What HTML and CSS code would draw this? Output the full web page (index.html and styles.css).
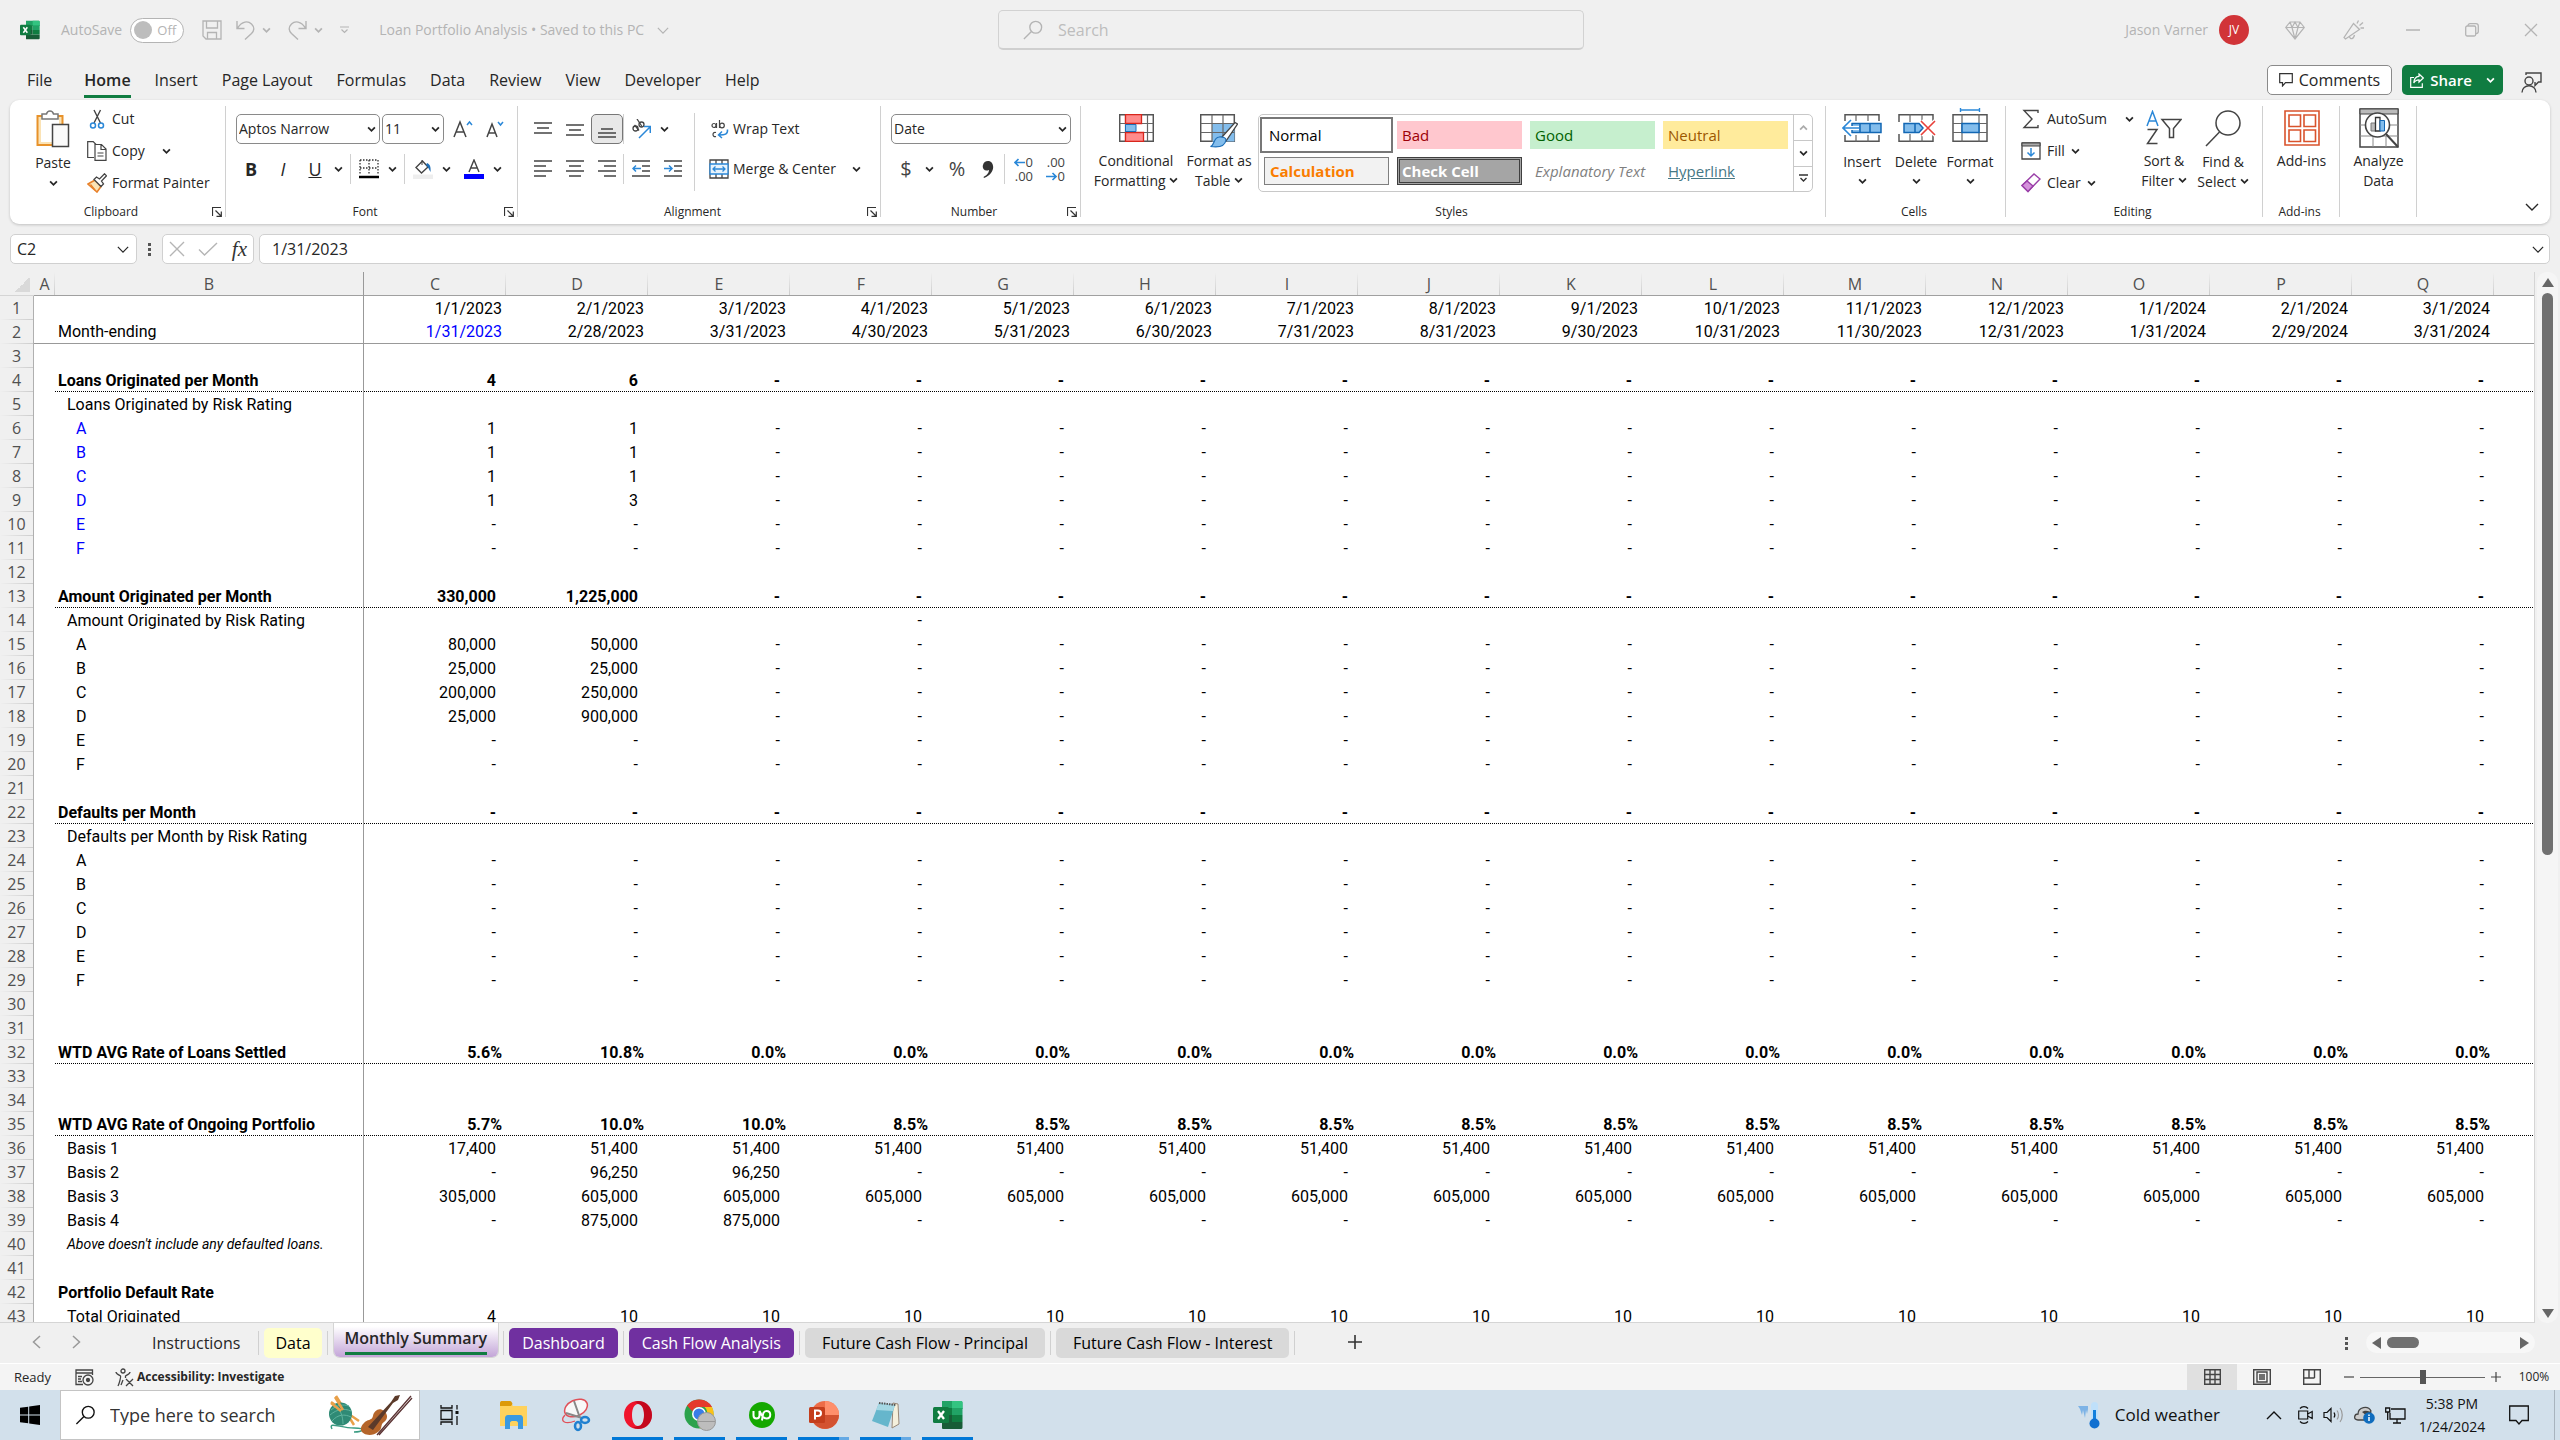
FILE: index.html
```html
<!DOCTYPE html>
<html lang="en">
<head>
<meta charset="utf-8">
<title>Loan Portfolio Analysis - Excel</title>
<link rel="stylesheet" href="styles.css">
</head>
<body>
<svg class="defs" aria-hidden="true">
  <symbol id="chev" viewBox="0 0 8 6"><path d="M1 1.2 4 4.2 7 1.2" fill="none" stroke="currentColor" stroke-width="1.6"/></symbol>
  <symbol id="chevL" viewBox="0 0 14 8"><path d="M1 1l6 6 6-6" fill="none" stroke="currentColor" stroke-width="1.4"/></symbol>
  <symbol id="excel" viewBox="0 0 30 30"><path d="M9 1h19a1.500 1.500 0 0 1 1.500 1.500V9H9z" fill="#21a366"/><path d="M19 1h9a1.500 1.500 0 0 1 1.500 1.500V9H19z" fill="#33c481"/><path d="M9 8h10v7H9z" fill="#107c41"/><path d="M19 8h10.500v7H19z" fill="#21a366"/><path d="M9 15h10v7H9z" fill="#185c37"/><path d="M19 15h10.500v7H19z" fill="#107c41"/><path d="M9 22h20.500v5.500A1.500 1.500 0 0 1 28 29H10a1 1 0 0 1-1-1z" fill="#185c37"/><rect y="7" width="16" height="16" rx="1.500" fill="#107c41"/><path d="M5 11l6 8M11 11l-6 8" stroke="#fff" stroke-width="2.300"/></symbol>
  <symbol id="magn" viewBox="0 0 22 22"><circle cx="14" cy="8" r="6.500" fill="none" stroke="currentColor" stroke-width="1.500"/><path d="M9.300 12.700 1 21" stroke="currentColor" stroke-width="1.500"/></symbol>
  <symbol id="launch" viewBox="0 0 10 10"><path d="M.5 9V.5H9M3.500 3.500l5 5M9.300 4.500v4.800H4.500" fill="none" stroke="#333" stroke-width="1.200"/></symbol>
</svg>

<header class="titlebar">
  <svg class="i20"><use href="#excel"/></svg>
  <label class="autosave"><span>AutoSave</span><span class="toggle"><input type="checkbox"><span class="off">Off</span></span></label>
  <button class="tb save" aria-label="Save"><svg width="20" height="20" viewBox="0 0 20 20" fill="none" stroke="currentColor" stroke-width="1.300"><path d="M1 1h18v18H4l-3-3zM4.500 1v7h11V1M5.500 19v-6.500h9V19"/></svg></button>
  <button class="tb undo" aria-label="Undo"><svg width="19" height="20" viewBox="0 0 19 20" fill="none" stroke="currentColor" stroke-width="1.400"><path d="M1 1v7.500h7.500M1.500 8C6 1 12 .5 15.500 4s2.500 7 0 9.500L9 19.500"/></svg></button>
  <button class="tb ch" aria-label="Undo list"><svg class="c8"><use href="#chev"/></svg></button>
  <button class="tb" aria-label="Redo"><svg width="19" height="20" viewBox="0 0 19 20" fill="none" stroke="currentColor" stroke-width="1.400"><path d="M18 1v7.500h-7.500M17.500 8C13 1 7 .5 3.500 4s-2.500 7 0 9.500l6.500 6"/></svg></button>
  <button class="tb ch" aria-label="Redo list"><svg class="c8"><use href="#chev"/></svg></button>
  <button class="tb cust" aria-label="Customize toolbar"><svg width="9" height="8" viewBox="0 0 9 8" fill="none" stroke="currentColor" stroke-width="1.200"><path d="M0 1h9M1.500 3.500l3 3 3-3"/></svg></button>
  <button class="tb docname">Loan Portfolio Analysis • Saved to this PC <svg width="12" height="7"><use href="#chevL"/></svg></button>
  <label class="search"><svg width="20" height="20"><use href="#magn"/></svg><input type="text" placeholder="Search" aria-label="Search"></label>
  <div class="account">
    <span class="who">Jason Varner</span><span class="avatar">JV</span>
    <button class="tb win" aria-label="Premium"><svg width="20" height="19" viewBox="0 0 20 19" fill="none" stroke="currentColor" stroke-width="1.200"><path d="M5 1h10l4.300 5.500L10 18 .7 6.500zM.7 6.500h18.600M5 1l2 5.500L10 18l3-11.500L15 1M7 6.500 10 1l3 5.500"/></svg></button>
    <button class="tb win" aria-label="What's new"><svg width="21" height="20" viewBox="0 0 21 20" fill="none" stroke="currentColor" stroke-width="1.300"><path d="M1 17.500 10.500 3.500l6 6L2.500 19zM6.500 16.500c.5 3 4 3 5-1.500M14 3.500 15.500.5M16.500 5.500 20 2.500M17.500 8h3.500"/></svg></button>
    <button class="tb win" aria-label="Minimize"><svg width="14" height="14" viewBox="0 0 14 14"><path d="M0 7h14" stroke="currentColor" stroke-width="1.500"/></svg></button>
    <button class="tb win" aria-label="Restore"><svg width="14" height="14" viewBox="0 0 14 14" fill="none" stroke="currentColor" stroke-width="1.300"><rect x=".7" y="3" width="10" height="10" rx="1.500"/><path d="M3 3C3 1.500 4 .7 5 .7h6c1.500 0 2.300 1 2.300 2.300v5.500c0 1.500-1 2-2.300 2.200"/></svg></button>
    <button class="tb win" aria-label="Close"><svg width="14" height="14" viewBox="0 0 14 14"><path d="M1 1l12 12M13 1 1 13" stroke="currentColor" stroke-width="1.300"/></svg></button>
  </div>
</header>

<nav class="menubar">
  <button class="file">File</button><button class="on">Home</button><button>Insert</button><button>Page Layout</button><button>Formulas</button><button>Data</button><button>Review</button><button>View</button><button>Developer</button><button>Help</button>
  <div class="right">
    <button class="comments"><svg width="14" height="14" viewBox="0 0 14 14" fill="none" stroke="#333" stroke-width="1.200"><path d="M.7.7h12.600v9H6.500L3.500 13V9.700H.7z"/></svg>Comments</button>
    <button class="share"><svg width="14" height="15" viewBox="0 0 14 15" fill="none" stroke="#fff" stroke-width="1.200"><path d="M4 4.500H.7v9.800h11.600v-4M9 1l4.300 4L9 9V6.800C6 6.800 4.800 8 3.800 10 4 6 5.500 3.500 9 3.300z"/></svg>Share<svg class="c8 sh"><use href="#chev"/></svg></button>
    <button class="person" aria-label="Catch up"><svg width="21" height="21" viewBox="0 0 21 21" fill="none" stroke="#444" stroke-width="1.400"><circle cx="8" cy="9" r="4"/><path d="M1 20.500c0-9 14-9 14 0M5 3V1h15v9h-2.500L14 13.500V10"/></svg></button>
  </div>
</nav>

<section class="ribbon" aria-label="Home commands">
  <div class="group g-clip">
    <div class="body">
      <button class="big paste"><svg width="34" height="38" viewBox="0 0 34 38"><path d="M1.500 6h25v29h-25z" fill="#fbe3b5" stroke="#e8922a" stroke-width="2"/><path d="M5 9h18v23H5z" fill="#fff"/><path d="M6 9V4h4.500c1-4 6-4 7 0H22v5z" fill="#fff" stroke="#777" stroke-width="1.500"/><path d="M16.500 14.500h16v22h-16z" fill="#fafafa" stroke="#444" stroke-width="1.500"/></svg><span>Paste</span><svg class="c8"><use href="#chev"/></svg></button>
      <div class="stack">
        <button class="row"><svg width="20" height="20" viewBox="0 0 20 20" fill="none"><path d="M7 1l6.500 13M13.500 1 7 14" stroke="#444" stroke-width="1.400"/><circle cx="6" cy="16.500" r="2.500" stroke="#2b88d8" stroke-width="1.500"/><circle cx="14" cy="16.500" r="2.500" stroke="#2b88d8" stroke-width="1.500"/></svg>Cut</button>
        <button class="row"><svg width="20" height="20" viewBox="0 0 20 20" fill="#fff" stroke="#444" stroke-width="1.200"><path d="M7 16.500H.7V.7h5.500L9 3.500"/><path d="M8 3.500h6.500l4.500 4.500v11.300H8zM14 3.500V8.500h5M10.500 12h6M10.500 15h6"/></svg>Copy<svg class="c8 gap14"><use href="#chev"/></svg></button>
        <button class="row"><svg width="20" height="20" viewBox="0 0 20 20"><path d="M1 11l7-4 6 6.500L10 19z" fill="#fbe3b5" stroke="#e8812a" stroke-width="1.600"/><path d="M3.500 11.500 8 17" stroke="#e8812a" stroke-width="1.300"/><path d="M7 6.500 9.500 4l3 2L17.500.8l2 2L14.500 8l2 3-2.500 2.500z" fill="#fff" stroke="#444" stroke-width="1.300"/></svg>Format Painter</button>
      </div>
    </div>
    <div class="foot"><span>Clipboard</span><button aria-label="Clipboard settings"><svg><use href="#launch"/></svg></button></div>
  </div>

  <div class="group g-font">
    <div class="body rows">
      <div class="line">
        <span class="sel fontname"><select aria-label="Font"><option>Aptos Narrow</option></select><svg class="c8"><use href="#chev"/></svg></span>
        <span class="sel fontsize"><select aria-label="Font size"><option>11</option></select><svg class="c8"><use href="#chev"/></svg></span>
        <button class="ic" aria-label="Grow font"><svg width="20" height="20" viewBox="0 0 20 20" fill="none"><path d="M1 18 7 3l6 15M3 13h8" stroke="#444" stroke-width="1.500"/><path d="M14 6l2.500-3L19 6" stroke="#2b88d8" stroke-width="1.500"/></svg></button>
        <button class="ic" aria-label="Shrink font"><svg width="20" height="20" viewBox="0 0 20 20" fill="none"><path d="M2 18 7 5l5 13M4 14h6" stroke="#444" stroke-width="1.500"/><path d="M13 3l2.500 3L18 3" stroke="#2b88d8" stroke-width="1.500"/></svg></button>
      </div>
      <div class="line">
        <button class="ic"><b>B</b></button><button class="ic"><i>I</i></button><button class="ic"><u>U</u></button><button class="ch"><svg class="c8"><use href="#chev"/></svg></button>
        <span class="sep"></span>
        <button class="ic" aria-label="Borders"><svg width="20" height="20" viewBox="0 0 20 20"><path d="M1 1h18M1 9h18M1 1v15M10 1v15M19 1v15" stroke="#333" stroke-width="1.300" stroke-dasharray="1.500 1.500"/><path d="M0 18h20" stroke="#000" stroke-width="2.500"/></svg></button><button class="ch"><svg class="c8"><use href="#chev"/></svg></button>
        <span class="sep"></span>
        <button class="ic" aria-label="Fill color"><svg width="20" height="20" viewBox="0 0 20 20"><path d="M0 15.500h20V20H0z" fill="#eee"/><path d="M3 8.500 9.500 2l5.500 6-6.500 6z" fill="#fff" stroke="#444" stroke-width="1.400"/><path d="M9 1v5" stroke="#444"/><path d="M14 4c3 1 4 4 3.500 9C16 11 15.500 8 13 6z" fill="#1e6fb8"/></svg></button><button class="ch"><svg class="c8"><use href="#chev"/></svg></button>
        <button class="ic" aria-label="Font color"><svg width="20" height="20" viewBox="0 0 20 20"><path d="M5 13 10 1l5 12M6.500 9h7" fill="none" stroke="#444" stroke-width="1.400"/><path d="M0 15h20v5H0z" fill="#00f"/></svg></button><button class="ch"><svg class="c8"><use href="#chev"/></svg></button>
      </div>
    </div>
    <div class="foot"><span>Font</span><button aria-label="Font settings"><svg><use href="#launch"/></svg></button></div>
  </div>

  <div class="group g-align">
    <div class="body">
      <div class="rows">
        <div class="line">
          <button class="ic" aria-label="Top align"><svg class="al" viewBox="0 0 18 18"><path d="M0 3h18M3 8h12M0 13h18"/></svg></button>
          <button class="ic" aria-label="Middle align"><svg class="al" viewBox="0 0 18 18"><path d="M0 5h18M3 10h12M0 15h18"/></svg></button>
          <button class="ic pressed" aria-label="Bottom align"><svg class="al" viewBox="0 0 18 18"><path d="M3 9h12M0 13h18M0 17h18"/></svg></button>
          <span class="sep tight"></span>
          <button class="ic" aria-label="Orientation"><svg width="20" height="20" viewBox="0 0 20 20"><g fill="none" stroke="#444" stroke-width="1.300"><circle cx="4.500" cy="9.500" r="2.500"/><path d="M3.500 6 8 11.500"/><circle cx="10.500" cy="5.500" r="2.500"/><path d="M6 0l5 7.500"/></g><path d="M8 19 19 8M13 7.500h6.300V14" fill="none" stroke="#2b88d8" stroke-width="1.500"/></svg></button><button class="ch"><svg class="c8"><use href="#chev"/></svg></button>
        </div>
        <div class="line">
          <button class="ic" aria-label="Align left"><svg class="al" viewBox="0 0 18 18"><path d="M0 1h18M0 6h12M0 11h18M0 16h12"/></svg></button>
          <button class="ic" aria-label="Center"><svg class="al" viewBox="0 0 18 18"><path d="M0 1h18M3 6h12M0 11h18M3 16h12"/></svg></button>
          <button class="ic" aria-label="Align right"><svg class="al" viewBox="0 0 18 18"><path d="M0 1h18M6 6h12M0 11h18M6 16h12"/></svg></button>
          <span class="sep tight"></span>
          <button class="ic" aria-label="Decrease indent"><svg class="al" viewBox="0 0 18 18"><path d="M0 1h18M10 6h8M10 11h8M0 16h18"/><path class="blue" d="M9 8.500H1M4 5.500l-3 3 3 3"/></svg></button>
          <button class="ic" aria-label="Increase indent"><svg class="al" viewBox="0 0 18 18"><path d="M0 1h18M10 6h8M10 11h8M0 16h18"/><path class="blue" d="M0 8.500h8M5 5.500l3 3-3 3"/></svg></button>
        </div>
      </div>
      <span class="vsep"></span>
      <div class="rows wrapcol">
        <button class="row"><svg width="20" height="20" viewBox="0 0 20 20" fill="none" stroke="#444" stroke-width="1.200"><circle cx="5" cy="6.500" r="2"/><path d="M7.500 4v5M10.500 1v8"/><circle cx="13" cy="6.500" r="2.300"/><path d="M7 13.500c-4-1.500-4 5.500 0 4"/><path d="M18.500 10.500c.5 5-3 5.500-8 5.500M13 12.500 9.500 16l3.500 3" stroke="#2b88d8" stroke-width="1.500"/></svg>Wrap Text</button>
        <button class="row"><svg width="20" height="20" viewBox="0 0 20 20" fill="none" stroke="#444" stroke-width="1.300"><path d="M1 1h18v18H1zM7 1v4M13 1v4M7 15v4M13 15v4M10 1"/><path d="M1 5h18v10H1z" fill="#e8f3fb" stroke="#2b88d8"/><path d="M4 10h12M6.500 7.500 4 10l2.500 2.500M13.500 7.500 16 10l-2.500 2.500" stroke="#2b88d8"/></svg>Merge &amp; Center<svg class="c8 gap14"><use href="#chev"/></svg></button>
      </div>
    </div>
    <div class="foot"><span>Alignment</span><button aria-label="Alignment settings"><svg><use href="#launch"/></svg></button></div>
  </div>

  <div class="group g-num">
    <div class="body rows">
      <div class="line"><span class="sel numfmt"><select aria-label="Number format"><option>Date</option></select><svg class="c8"><use href="#chev"/></svg></span></div>
      <div class="line">
        <button class="ic sym">$</button><button class="ch"><svg class="c8"><use href="#chev"/></svg></button><button class="ic sym pct">%</button><button class="ic" aria-label="Comma style"><svg width="12" height="17" viewBox="0 0 12 17"><path d="M6 0c7 0 8 13-4 17l-.5-1C6 13.500 7 11 7 9 2 11 0 7 1 4 1.500 1.500 3.500 0 6 0z" fill="#333"/></svg></button>
        <span class="sep tight"></span>
        <button class="dec" aria-label="Increase decimal"><span><svg width="11" height="9" viewBox="0 0 11 9"><path d="M11 4.500H1M4.500 1 1 4.500 4.500 8"/></svg>0</span><span>.00</span></button>
        <button class="dec" aria-label="Decrease decimal"><span>.00</span><span><svg width="11" height="9" viewBox="0 0 11 9"><path d="M0 4.500h10M6.500 1 10 4.500 6.500 8"/></svg>0</span></button>
      </div>
    </div>
    <div class="foot"><span>Number</span><button aria-label="Number settings"><svg><use href="#launch"/></svg></button></div>
  </div>

  <div class="group g-styles">
    <div class="body">
      <button class="big two cf"><svg width="35" height="28" viewBox="0 0 35 28"><path d="M.7.700h33.600v26.600H.7z" fill="#fff" stroke="#555" stroke-width="1.500"/><path d="M.7 9.500h33.600M.7 18.500h33.600M6.500.7v26.600M16 .7v26.600M28.500.7v26.600" stroke="#666" stroke-width="1.200"/><path d="M6.500.700h16v8.800h-16zM6.500 18.500h18v8.800h-18z" fill="#ff8b8b" stroke="#d8261c" stroke-width="1.300"/><path d="M6.500 10.500H17v7H6.500z" fill="#83bdec" stroke="#1e6fb8"/></svg><span>Conditional<br>Formatting <svg class="c8"><use href="#chev"/></svg></span></button>
      <button class="big two fat"><svg width="38" height="34" viewBox="0 0 38 34"><path d="M.7.700h33.600v26.600H.7z" fill="#fff" stroke="#555" stroke-width="1.500"/><path d="M12 9.500h22.500v18H12z" fill="#83bdec"/><path d="M.7 9.500h33.600M.7 18.500h33.600M12 .7v26.600M23 .7v26.600" stroke="#666" stroke-width="1.200"/><path d="M22 23 35 8.500l2.500 1.500L26 27z" fill="#fff" stroke="#444" stroke-width="1.300"/><path d="M26 26c-1 6-6 8-15.500 6.500 4-1 3-9 8.500-9.500 4-.5 7 1 7 3z" fill="#83bdec" stroke="#1e6fb8" stroke-width="1.200"/></svg><span>Format as<br>Table <svg class="c8"><use href="#chev"/></svg></span></button>
      <div class="gallery">
        <div class="swatches">
          <button class="s-normal">Normal</button><button class="s-bad">Bad</button><button class="s-good">Good</button><button class="s-neutral">Neutral</button>
          <button class="s-calc">Calculation</button><button class="s-check">Check Cell</button><button class="s-expl">Explanatory Text</button><button class="s-link">Hyperlink</button>
        </div>
        <div class="gscroll"><button class="dim" aria-label="Up"><svg class="c8 flip"><use href="#chev"/></svg></button><button aria-label="Down"><svg class="c8"><use href="#chev"/></svg></button><button aria-label="More"><svg width="9" height="9" viewBox="0 0 9 9" fill="none" stroke="#333" stroke-width="1.400"><path d="M0 1h9M1.500 4l3 3 3-3"/></svg></button></div>
      </div>
    </div>
    <div class="foot"><span>Styles</span></div>
  </div>

  <div class="group g-cells">
    <div class="body">
      <button class="big cell"><svg width="40" height="40" viewBox="0 0 40 40"><path d="M3 6.700h34v26.600H3z" fill="#fff" stroke="#555" stroke-width="1.500"/><path d="M14 6v28M26 6v28" stroke="#666" stroke-width="1.200"/><path d="M0 13h40v14H0z" fill="#fff"/><path d="M10 15.500h29v9H10zM18 15.500v9M28 15.500v9" fill="#83bdec" stroke="#1267b4" stroke-width="1.500"/><path d="M17 20H1M9 12l-8 8 8 8" fill="none" stroke="#fff" stroke-width="4"/><path d="M17 20H1M9 12l-8 8 8 8" fill="none" stroke="#2b88d8" stroke-width="1.600"/></svg><span>Insert</span><svg class="c8"><use href="#chev"/></svg></button>
      <button class="big cell"><svg width="40" height="40" viewBox="0 0 40 40"><path d="M3 6.700h34v26.600H3z" fill="#fff" stroke="#555" stroke-width="1.500"/><path d="M14 6v28M26 6v28" stroke="#666" stroke-width="1.200"/><path d="M0 14h40v12H0z" fill="#fff"/><path d="M8 15.500h15l4 4.500-4 4.500H8zM19 15.500v9" fill="#83bdec" stroke="#1267b4" stroke-width="1.500"/><path d="M25 13l14 14M39 13 25 27" stroke="#fff" stroke-width="4"/><path d="M25 13l14 14M39 13 25 27" stroke="#e8403a" stroke-width="1.600"/></svg><span>Delete</span><svg class="c8"><use href="#chev"/></svg></button>
      <button class="big cell"><svg width="40" height="40" viewBox="0 0 40 40"><path d="M3 6.700h34v26.600H3z" fill="#fff" stroke="#555" stroke-width="1.500"/><path d="M3 15.500h34M3 24.500h34M12 6v28M29 6v28" stroke="#666" stroke-width="1.200"/><path d="M12 15.500h17v9H12z" fill="#83bdec" stroke="#1267b4" stroke-width="1.500"/><path d="M10.500 2h19M10.500 0v4M29.500 0v4" stroke="#2b88d8" stroke-width="1.400"/></svg><span>Format</span><svg class="c8"><use href="#chev"/></svg></button>
    </div>
    <div class="foot"><span>Cells</span></div>
  </div>

  <div class="group g-edit">
    <div class="body">
      <div class="stack">
        <button class="row"><svg width="20" height="20" viewBox="0 0 20 20"><path d="M17 4V1.500H3L11 10 3 18.500h14V16" fill="none" stroke="#444" stroke-width="1.400"/></svg>AutoSum<svg class="c8 gap14"><use href="#chev"/></svg></button>
        <button class="row"><svg width="20" height="20" viewBox="0 0 20 20"><path d="M1 2h18v16H1z" fill="#fff" stroke="#444" stroke-width="1.300"/><path d="M1 2h18v3H1z" fill="#aaa" stroke="#444"/><path d="M10 7v8M6.500 11.500 10 15l3.500-3.500" fill="none" stroke="#2b88d8" stroke-width="1.500"/></svg>Fill<svg class="c8"><use href="#chev"/></svg></button>
        <button class="row"><svg width="20" height="20" viewBox="0 0 20 20"><path d="M1 12.500 13 1l6 5L7 18.500z" fill="#fff" stroke="#9a3fa8" stroke-width="1.400"/><path d="M1 12.500 6 8l6 5-5 5.500z" fill="#d592dc" stroke="#9a3fa8" stroke-width="1.400"/></svg>Clear<svg class="c8"><use href="#chev"/></svg></button>
      </div>
      <button class="big two sf"><svg width="36" height="36" viewBox="0 0 36 36" fill="none" stroke-width="1.500"><path d="M1 16 6.500 1.500 12 16M3 11h7" stroke="#2b88d8"/><path d="M1.500 19.500h9.500L1.500 33.500H11.500" stroke="#444"/><path d="M16 9.500h19l-7.500 9V27.500h-4v-9z" stroke="#444"/></svg><span>Sort &amp;<br>Filter <svg class="c8"><use href="#chev"/></svg></span></button>
      <button class="big two fs"><svg width="36" height="37" viewBox="0 0 36 37" fill="none" stroke="#444" stroke-width="1.500"><circle cx="23" cy="13" r="12"/><path d="M14.500 22 1 36"/></svg><span>Find &amp;<br>Select <svg class="c8"><use href="#chev"/></svg></span></button>
    </div>
    <div class="foot"><span>Editing</span></div>
  </div>

  <div class="group g-add">
    <div class="body"><button class="big two"><svg width="36" height="36" viewBox="0 0 36 36" fill="none" stroke="#d9532c"><path d="M1 1h34v34H1z" stroke-width="1.600"/><path d="M5 5h11.500v11.500H5zM20 5h11.500v11.500H20zM5 20h11.500v11.500H5zM20 20h11.500v11.500H20z" stroke-width="1.600"/></svg><span>Add-ins</span></button></div>
    <div class="foot"><span>Add-ins</span></div>
  </div>
  <div class="group g-data">
    <div class="body"><button class="big two"><svg width="40" height="40" viewBox="0 0 40 40"><path d="M1 1h38v38H1z" fill="#fff" stroke="#444" stroke-width="1.500"/><path d="M1 1h38v5H1z" fill="#bbb" stroke="#444"/><path d="M1 17h38M1 28h38M14 28v11M27 28v11" stroke="#888"/><circle cx="18.500" cy="17" r="12" fill="#fff" stroke="#444" stroke-width="1.600"/><path d="M27 26 39 39" stroke="#444" stroke-width="2"/><path d="M12 15h5v8h-5z" fill="#bbb" stroke="#777"/><path d="M16.500 9.500h4.500V23h-4.500z" fill="#fff" stroke="#333" stroke-width="1.300"/><path d="M21 12.500h4.500V23H21z" fill="#83bdec" stroke="#1267b4"/></svg><span>Analyze<br>Data</span></button></div>
    <div class="foot"></div>
  </div>
  <button class="collapse" aria-label="Collapse ribbon"><svg width="14" height="8"><use href="#chevL"/></svg></button>
</section>

<div class="formulabar">
  <span class="namebox"><input type="text" value="C2" aria-label="Name box"><svg width="12" height="7"><use href="#chevL"/></svg></span>
  <span class="dots"></span>
  <span class="fx">
    <button aria-label="Cancel"><svg width="16" height="16" viewBox="0 0 16 16"><path d="M1 1l14 14M15 1 1 15" stroke="#b5b5b5" stroke-width="1.400"/></svg></button>
    <button aria-label="Enter"><svg width="20" height="14" viewBox="0 0 20 14"><path d="M1 7.500 6.500 13 19 1" fill="none" stroke="#b5b5b5" stroke-width="1.400"/></svg></button>
    <button class="fxb">fx</button>
  </span>
  <span class="formula"><input type="text" value="1/31/2023" aria-label="Formula"><svg width="12" height="7"><use href="#chevL"/></svg></span>
</div>

<main class="sheet">
  <div class="gridwrap">
    <table class="grid">
      <colgroup id="cols"><col class="w-head"><col class="w-a"><col class="w-b"></colgroup>
      <thead><tr id="heads"><th class="corner"></th></tr></thead>
      <tbody id="rows"></tbody>
    </table>
  </div>
  <div class="vscroll"><span class="arrow-up"></span><span class="thumb"></span><span class="arrow-down"></span></div>
</main>

<div class="sheettabs">
  <button class="nav first" aria-label="Previous sheet"><svg width="9" height="14" viewBox="0 0 9 14"><path d="M8 1 1.500 7 8 13" fill="none" stroke="#999" stroke-width="1.500"/></svg></button>
  <button class="nav" aria-label="Next sheet"><svg width="9" height="14" viewBox="0 0 9 14"><path d="M1 1l6.500 6L1 13" fill="none" stroke="#999" stroke-width="1.500"/></svg></button>
  <button class="tab plain">Instructions</button>
  <button class="tab data">Data</button>
  <button class="tab active"><span>Monthly Summary</span></button>
  <button class="tab purple">Dashboard</button>
  <button class="tab purple">Cash Flow Analysis</button>
  <button class="tab gray">Future Cash Flow - Principal</button>
  <button class="tab gray">Future Cash Flow - Interest</button>
  <button class="plus" aria-label="New sheet"><svg width="14" height="14" viewBox="0 0 14 14"><path d="M0 7h14M7 0v14" stroke="#333" stroke-width="1.600"/></svg></button>
  <span class="dots"></span>
  <div class="hscroll"><span class="lt"></span><span class="thumb"></span><span class="rt"></span></div>
</div>

<footer class="status">
  <span class="ready">Ready</span>
  <svg width="19" height="17" viewBox="0 0 19 17" fill="none" stroke="#444" stroke-width="1.300"><path d="M8 15.500H1V1h16.500v5M1 4h16.500M3 7.500h4M3 10h3M3 12.500h4"/><circle cx="13" cy="11" r="5"/><circle cx="13" cy="11" r="1.500" fill="#444"/></svg>
  <button class="acc"><svg width="19" height="19" viewBox="0 0 19 19" fill="none" stroke="#444" stroke-width="1.300"><circle cx="8" cy="3" r="2"/><path d="M1 4c0 2 4 3.500 4.500 4S4.500 15 3 18M15 4c0 2-4 3.500-4.500 4v2M6 17l2-5M11 11l7 7M18 11l-7 7"/></svg>Accessibility: Investigate</button>
  <div class="views">
    <button class="on" aria-label="Normal view"><svg width="17" height="16" viewBox="0 0 17 16" fill="none" stroke="#444" stroke-width="1.400"><path d="M.7.700h15.600v14.600H.7zM.7 5.500h15.600M.7 10.500h15.600M6 .7v14.600M11 .7v14.600"/></svg></button>
    <button aria-label="Page layout view"><svg width="18" height="16" viewBox="0 0 18 16" fill="none" stroke="#444" stroke-width="1.400"><path d="M.7.700h16.600v14.600H.7zM4 3h10v10H4zM6 6h6M6 8h6M6 10h6"/></svg></button>
    <button aria-label="Page break preview"><svg width="18" height="16" viewBox="0 0 18 16" fill="none" stroke="#444" stroke-width="1.400"><path d="M.7.700h16.600v14.600H.7zM6 .7V9M11.500.7V9M.7 9h10.800"/></svg></button>
  </div>
  <div class="zoom"><button aria-label="Zoom out"><svg width="10" height="10" viewBox="0 0 10 10"><path d="M0 5h10" stroke="#444" stroke-width="1.200"/></svg></button><input type="range" min="0" max="100" value="50" aria-label="Zoom"><button aria-label="Zoom in"><svg width="10" height="10" viewBox="0 0 10 10"><path d="M0 5h10M5 0v10" stroke="#444" stroke-width="1.200"/></svg></button><button class="pc">100%</button></div>
</footer>

<div class="taskbar">
  <button class="start" aria-label="Start"><svg width="20" height="20" viewBox="0 0 20 20"><path d="M0 2.800 8.200 1.700v7.800H0zM9.200 1.500 20 0v9.500H9.200zM0 10.500h8.200v7.800L0 17.200zM9.200 10.500H20V20L9.200 18.500z"/></svg></button>
  <label class="tsearch"><svg width="21" height="20"><use href="#magn"/></svg><input type="text" placeholder="Type here to search" aria-label="Type here to search">
    <svg class="art" width="88" height="42" viewBox="0 0 88 42"><path d="M4 35c-4-8 8-1 22-1s8 4 0 4" fill="none" stroke="#3b9c83" stroke-width="1.500"/><path d="M8 2l18 29M3 8l28 19" stroke="#e8a04a" stroke-width="2.500"/><circle cx="12.500" cy="20" r="11.500" fill="#2f8a75"/><path d="M3 16c6-5 12-6 18-4M2 21c7-6 14-7 21-4M4 27c6-7 13-7 19-4M7 10c5 5 8 12 8 20" fill="none" stroke="#5fb39e"/><path d="M7 3l8 13M3 9l10 8" stroke="#e8a04a" stroke-width="2.500"/><path d="M36 29c3-4 8-2 9-7 1-5 6-9 11-5s3 9 0 11c-4 2-1 7-6 10-6 5-16 3-17-2-.5-3 1-5 3-7z" fill="#b5652a"/><path d="M40 33 63 8l4-6 5-1-2 5-5 3-20 27z" fill="#5b3a2a"/><path d="M49 41 83 2M51 41 84 4" stroke="#5b3333" stroke-width="1.300"/></svg>
  </label>
  <div class="apps">
    <button aria-label="Task View"><svg width="20" height="20" viewBox="0 0 20 20" fill="none" stroke="#111" stroke-width="1.300"><path d="M1 0v3h11V0M1 20v-3h11v3M1 5.500h11v9H1zM17 0v4.500M17 11v9"/><path d="M15.500 6h3v3h-3z" fill="#111" stroke="none"/></svg></button>
    <button aria-label="File Explorer"><svg width="28" height="28" viewBox="0 0 28 28"><path d="M0 2h11l2 3h14v20H0z" fill="#ffd25c"/><path d="M0 2c0-1 .5-2 1.500-2H10c1 0 2 1 2.500 3l-1.500 2H0z" fill="#dd9a09"/><path d="M5 28V17c0-1.500 1-3 3-3h12c2 0 3 1.500 3 3v11h-5v-6c0-1-1-2-2-2h-4c-1 0-2 1-2 2v6z" fill="#3b9ae0"/></svg></button>
    <button aria-label="Snipping Tool"><svg width="30" height="34" viewBox="0 0 30 34" fill="none"><ellipse cx="15" cy="10" rx="12" ry="8" transform="rotate(-25 15 10)" fill="#f8f8f8" stroke="#e05058" stroke-width="1.500"/><path d="M4 17c-6 6 0 10 10 6" stroke="#e05058" stroke-width="1.300"/><path d="M13 3l6 17M5 15l16 5" stroke="#888" stroke-width="2"/><ellipse cx="24" cy="22" rx="4" ry="3" stroke="#2080d0" stroke-width="2.500"/><ellipse cx="17" cy="28" rx="3" ry="4" stroke="#2080d0" stroke-width="2.500"/></svg></button>
    <button class="run" aria-label="Opera"><svg width="30" height="30" viewBox="0 0 30 30"><path fill-rule="evenodd" d="M15 1C7 1 1 7 1 15s6 14 14 14 14-6 14-14S23 1 15 1zm0 3c4 0 6 5 6 11s-2 11-6 11-6-5-6-11 2-11 6-11z" fill="#f0142c"/><path d="M15 29c8 0 14-6 14-14S23 1 15 1c-2 0-4 1-5 2 1.500-1 3.500-1 5 1 4 0 6 5 6 11s-2 11-6 11c-2 1-4 1-5 1 1 1 3 2 5 2z" fill="#a70014" opacity=".6"/></svg></button>
    <button class="run" aria-label="Chrome"><svg width="32" height="32" viewBox="0 0 32 32"><circle cx="15" cy="15" r="14.500" fill="#2ba24c"/><path d="M15 .5A14.500 14.500 0 0 1 28 8H15a7 7 0 0 0-6.500 4.500L3 6.500A14.500 14.500 0 0 1 15 .5z" fill="#e53a2c"/><path d="M28 8a14.500 14.500 0 0 1-12.500 21.500L21.500 18a7 7 0 0 0-1-10z" fill="#fbc116"/><circle cx="15" cy="15" r="7" fill="#fff"/><circle cx="15" cy="15" r="5.500" fill="#3a7de8"/><circle cx="22.500" cy="22.500" r="9" fill="#bdbdbd" stroke="#999"/><path d="M14 22.500h17" stroke="#999"/></svg></button>
    <button class="run" aria-label="Upwork"><svg width="26" height="26" viewBox="0 0 26 26"><circle cx="13" cy="13" r="13" fill="#14a800"/><path d="M4.500 9v4.500c0 4 6 4 6 0V9c1.500 3.500 3.500 7.500 7 7.500 5 0 5-7.500 0-7.500-3 0-3.500 2-4.500 9.500" fill="none" stroke="#fff" stroke-width="2"/></svg></button>
    <button class="run multi" aria-label="PowerPoint"><svg width="30" height="30" viewBox="0 0 30 30"><circle cx="16" cy="15" r="14" fill="#ed6c47"/><path d="M16 1a14 14 0 0 1 14 14H16z" fill="#ff8f6b"/><path d="M30 15a14 14 0 0 1-26 7l12-7z" fill="#d35230"/><rect y="7" width="16" height="16" rx="1.500" fill="#c43e1c"/><path d="M6 19.500v-9h3c4 0 4 5.500 0 5.500H6" fill="none" stroke="#fff" stroke-width="2"/></svg></button>
    <button class="run multi" aria-label="Notepad"><svg width="30" height="28" viewBox="0 0 30 28"><path d="M22 2l5 1 1 20-7 4z" fill="#f5f0dc" stroke="#987"/><path d="M8 2l16 2-7 22L1 20z" fill="#66b6cc"/><path d="M8 2l16 2-2 6L5 9z" fill="#a5d8e4"/><path d="M8 2l17 2" stroke="#555" stroke-width="2" stroke-dasharray="1.500 1"/></svg></button>
    <button class="run" aria-label="Excel"><svg width="30" height="30"><use href="#excel"/></svg></button>
  </div>
  <div class="tray">
    <button class="weather"><svg width="26" height="28" viewBox="0 0 26 28"><path d="M1 5h10v3l-1 5-1-4-1 8-2-8-1 5-2-6z" fill="#7db3e6"/><rect x="14" y="1" width="7" height="20" rx="3.500" fill="#bfe0fa"/><path d="M16 9h3v12h-3z" fill="#1280dd"/><circle cx="17.500" cy="22.500" r="5" fill="#0f6fd0"/></svg>Cold weather</button>
    <button class="t hidden-icons" aria-label="Hidden icons"><svg width="16" height="9" viewBox="0 0 16 9"><path d="M1 8l7-7 7 7" fill="none" stroke="#111" stroke-width="1.400"/></svg></button>
    <button class="t" aria-label="Meet now"><svg width="15" height="18" viewBox="0 0 15 18" fill="none" stroke="#111" stroke-width="1.200"><path d="M.7 5h9v8h-9zM9.700 8l4.500-2.500v7L9.700 10M2 2.500c2-2.400 6-2.400 8 0M2 15.500c2 2.400 6 2.400 8 0"/></svg></button>
    <button class="t" aria-label="Volume"><svg width="21" height="16" viewBox="0 0 21 16" fill="none" stroke="#111" stroke-width="1.200"><path d="M1 5.500h3L8 1.500v13l-4-4H1zM11 5.500c1 1.500 1 3.500 0 5"/><path d="M14 3.500c2 2.500 2 6.500 0 9M17 1c3 4 3 10 0 14" stroke="#999"/></svg></button>
    <button class="t" aria-label="OneDrive"><svg width="21" height="18" viewBox="0 0 21 18"><path d="M4 14c-5 0-4-6 0-6 0-7 10-9 13-3l-6 9z" fill="#ccc" stroke="#444" stroke-width="1.300"/><path d="M8 6c4-3 8 0 10 0l-5 4z" fill="#444"/><circle cx="15" cy="12" r="5.800" fill="#0f6cbd"/><path d="M15 11v4M15 8.500v1.400" stroke="#fff" stroke-width="1.500"/></svg></button>
    <button class="t" aria-label="Network"><svg width="21" height="17" viewBox="0 0 21 17" fill="none" stroke="#111" stroke-width="1.300"><path d="M6 2h14v10H5V6M8 16h8M12 12v4M.7 1h4v4h-4zM2.700 5v8"/></svg></button>
    <button class="clock"><span>5:38 PM</span><span>1/24/2024</span></button>
    <button class="t note-btn" aria-label="Notifications"><svg width="20" height="20" viewBox="0 0 20 20"><path d="M.7 1h18.600v14.500H13L10 19l-3-3.500H.7z" fill="none" stroke="#111" stroke-width="1.300"/></svg></button>
  </div>
</div>
<script src="sheet.js"></script>
</body>
</html>
```
FILE: sheet.js
```js
// Workbook data: row number -> { t: label, lv: indent level, v: values, cls: row style }
const COLS = 15;
const fill = (first, rest) => Array.from({ length: COLS }, (_, i) => first[i] ?? rest);
const dash = '-';
const starts = [], ends = [];
for (let i = 0; i < COLS; i++) {
  const y = 2023 + Math.floor(i / 12), m = i % 12;
  starts.push(`${m + 1}/1/${y}`);
  ends.push(`${m + 1}/${new Date(y, m + 1, 0).getDate()}/${y}`);
}
const rows = {
  1: { v: starts, cls: 'date' },
  2: { t: 'Month-ending', v: ends, cls: 'date freeze' },
  4: { t: 'Loans Originated per Month', v: fill(['4', '6'], dash), cls: 'total' },
  5: { t: 'Loans Originated by Risk Rating', lv: 1 },
  13: { t: 'Amount Originated per Month', v: fill(['330,000', '1,225,000'], dash), cls: 'total' },
  14: { t: 'Amount Originated by Risk Rating', lv: 1, v: fill(['', '', '', dash], '') },
  22: { t: 'Defaults per Month', v: fill([], dash), cls: 'total' },
  23: { t: 'Defaults per Month by Risk Rating', lv: 1 },
  32: { t: 'WTD AVG Rate of Loans Settled', v: fill(['5.6%', '10.8%'], '0.0%'), cls: 'total rate' },
  35: { t: 'WTD AVG Rate of Ongoing Portfolio', v: fill(['5.7%', '10.0%', '10.0%'], '8.5%'), cls: 'total rate' },
  36: { t: 'Basis 1', lv: 1, v: fill(['17,400'], '51,400') },
  37: { t: 'Basis 2', lv: 1, v: fill([dash, '96,250', '96,250'], dash) },
  38: { t: 'Basis 3', lv: 1, v: fill(['305,000'], '605,000') },
  39: { t: 'Basis 4', lv: 1, v: fill([dash, '875,000', '875,000'], dash) },
  40: { t: "Above doesn't include any defaulted loans.", lv: 1, cls: 'note' },
  42: { t: 'Portfolio Default Rate', cls: 'strong' },
  43: { t: 'Total Originated', lv: 1, v: fill(['4'], '10') },
};
const counts = [['1', '1'], ['1', '1'], ['1', '1'], ['1', '3'], [], []];
const amounts = [['80,000', '50,000'], ['25,000', '25,000'], ['200,000', '250,000'], ['25,000', '900,000'], [], []];
[...'ABCDEF'].forEach((t, i) => {
  rows[6 + i] = { t, lv: 2, v: fill(counts[i], dash), cls: 'input' };
  rows[15 + i] = { t, lv: 2, v: fill(amounts[i], dash) };
  rows[24 + i] = { t, lv: 2, v: fill([], dash) };
});

let cols = '', heads = '<th>A</th><th class="b">B</th>';
for (let i = 0; i < COLS; i++) {
  cols += '<col class="w-m">';
  heads += `<th>${String.fromCharCode(67 + i)}</th>`;
}
document.getElementById('cols').insertAdjacentHTML('beforeend', cols + '<col>');
document.getElementById('heads').insertAdjacentHTML('beforeend', heads + '<th class="rest"></th>');

let html = '';
for (let n = 1; n <= 43; n++) {
  const r = rows[n] || {};
  const cells = (r.v || fill([], '')).map(v => `<td>${v}</td>`).join('');
  html += `<tr class="${r.cls || ''}"><th scope="row">${n}</th><td class="a"></td>` +
    `<td class="label lv${r.lv || 0}">${r.t || ''}</td>${cells}<td></td></tr>`;
}
document.getElementById('rows').innerHTML = html;
```
FILE: styles.css
```css
* { box-sizing: border-box; }
html, body { height: 100%; margin: 0; }
body { display: flex; flex-direction: column; background: #f0f0f0; color: #262626; font: 14px/20px "Open Sans", sans-serif; overflow: hidden; }
button, input, select { font: inherit; color: inherit; background: none; border: 0; padding: 0; margin: 0; outline: 0; }
button { display: inline-flex; align-items: center; justify-content: center; white-space: nowrap; }
svg { flex: none; display: block; }
.defs { position: absolute; width: 0; height: 0; }
.c8 { width: 9px; height: 7px; }
.i20 { width: 20px; height: 20px; }

/* title bar */
.titlebar { display: flex; align-items: center; height: 60px; flex: none; padding-left: 20px; color: #b4b4b4; position: relative; }
.autosave { display: flex; align-items: center; gap: 8px; margin-left: 21px; }
.toggle { display: flex; align-items: center; width: 54px; height: 25px; border: 1px solid #b4b4b4; border-radius: 13px; background: #fff; padding: 0 7px 0 3px; justify-content: space-between; }
.toggle input { appearance: none; width: 18px; height: 18px; border-radius: 50%; background: #bdbdbd; }
.off { font-size: 13px; }
.tb { color: #b4b4b4; height: 30px; margin-left: 14px; }
.tb.save { margin-left: 18px; }
.tb.ch { margin-left: 4px; }
.tb.cust { margin-left: 14px; }
.tb.docname { margin-left: 30px; gap: 13px; }
.search { position: absolute; left: 50%; top: 10px; width: 586px; margin-left: -282px; height: 40px; border: 1px solid #d2d2d2; border-bottom: 2px solid #cfcfcf; border-radius: 5px; display: flex; align-items: center; gap: 15px; padding-left: 24px; font-size: 16px; }
.search input { flex: 1; }
input::placeholder { color: #bdbdbd; opacity: 1; }
.account { display: flex; align-items: center; margin-left: auto; }
.avatar { width: 30px; height: 30px; line-height: 30px; border-radius: 50%; background: #d13438; color: #fff; text-align: center; font-size: 12px; margin: 0 16px 0 11px; }
.tb.win { width: 59px; margin: 0; }

/* ribbon tabs */
.menubar { display: flex; height: 40px; flex: none; padding: 5px 18px 0 27px; gap: 24px; font-size: 16px; align-items: flex-start; }
.menubar > button { height: 33px; border-bottom: 3px solid transparent; }
.menubar > .file { margin-right: 8px; }
.menubar > .on { font-weight: 600; border-color: #107c41; }
.menubar .right { display: flex; margin-left: auto; }
.comments { width: 125px; height: 30px; background: #fff; border: 1px solid #8a8a8a; border-radius: 5px; gap: 6px; }
.share { width: 101px; height: 30px; margin-left: 10px; background: #107c41; color: #fff; border-radius: 5px; gap: 6px; font-weight: 600; font-size: 15px; }
.share .sh { margin-left: 8px; }
.person { margin: 4px 0 0 18px; }

/* ribbon */
.ribbon { display: flex; flex: none; height: 124px; margin: 0 10px; background: #fff; border-radius: 9px; box-shadow: 0 1px 3px #0003; position: relative; }
.group { position: relative; display: flex; flex-direction: column; flex: none; }
.group::after { content: ""; position: absolute; right: 0; top: 6px; bottom: 7px; width: 1px; background: #d0d0d0; }
.body { display: flex; flex: 1; }
.rows { display: flex; flex-direction: column; gap: 10px; padding-top: 14px; }
.line { display: flex; align-items: center; height: 30px; }
.stack { display: flex; flex-direction: column; padding-top: 3px; }
.row { height: 32px; gap: 4px; justify-content: flex-start; }
.rows .row { height: 30px; }
.gap14 { margin-left: 12px; }
.foot { display: flex; align-items: center; height: 24px; font-size: 12px; padding-right: 4px; }
.foot span { flex: 1; text-align: center; }
.foot svg { width: 10px; height: 10px; }
.ic { width: 32px; height: 30px; font-size: 18px; }
.ch { width: 15px; height: 30px; }
.sep { width: 1px; height: 30px; background: #d0d0d0; margin: 0 2px 0 4px; }
.sep.tight { margin: 0 1px 0 0; }
.vsep { width: 1px; height: 78px; margin: 13px 14px 0 5px; background: #d0d0d0; }
.sel { display: flex; align-items: center; height: 30px; border: 1px solid #8a8a8a; border-radius: 5px; padding: 0 3px 0 2px; }
.sel select { appearance: none; flex: 1; width: 0; }
.fontname { width: 144px; margin-right: 2px; }
.fontsize { width: 62px; margin-right: 3px; }
.numfmt { width: 180px; }
.al { width: 18px; height: 18px; fill: none; stroke: #444; stroke-width: 1.5; }
.blue { stroke: #2b88d8; }
.pressed { background: #e8e8e8; border: 1px solid #777; border-radius: 5px; }
.big { flex-direction: column; justify-content: flex-start; }
.big span { line-height: 20px; }
.big span .c8 { display: inline-block; vertical-align: 2px; }
.g-clip { width: 216px; }
.g-clip .stack { margin-left: -2px; }
.paste { width: 56px; margin: 10px 8px 0 15px; }
.paste span { margin: 5px 0 7px; }
.g-clip .row { gap: 5px; }
.g-font { width: 292px; }
.g-font .body { padding-left: 9px; }
.g-font .line:first-child { padding-left: 1px; }
.g-font .line .ch + .ic { margin-left: 4px; }
.g-align { width: 363px; }
.g-align .body { padding-left: 9px; }
.g-num { width: 200px; }
.g-num .body { padding-left: 10px; }
.sym { width: 30px; font-size: 20px; color: #444; }
.pct { margin-left: 5px; }
.g-num .ch { margin-left: 1px; }
.dec { display: flex; flex-direction: column; align-items: center; width: 32px; height: 30px; font-size: 13px; line-height: 14px; color: #444; }
.dec > span { display: flex; align-items: center; justify-content: flex-end; width: 22px; }
.dec svg { fill: none; stroke: #2b88d8; stroke-width: 1.6; margin-right: 1px; }
.g-styles { width: 745px; }
.two { padding-top: 14px; }
.two span { margin-top: 9px; }
.cf { width: 84px; margin-left: 13px; }
.fat { width: 76px; margin-left: 3px; }
.fat span { margin-top: 3px; }
.gallery { display: flex; flex: none; height: 78px; margin: 14px 0 0 1px; border: 1px solid #c8c8c8; border-radius: 5px; }
.swatches { display: grid; grid-template-columns: repeat(4, 125px); grid-auto-rows: 28px; gap: 8px; padding: 6px 5px 6px 5px; font-size: 15px; }
.swatches button { justify-content: flex-start; padding-left: 5px; }
.s-normal { background: #fff; color: #000; outline: 2px solid #777; outline-offset: 2px; }
.s-bad { background: #ffc7ce; color: #9c0006; }
.s-good { background: #c6efce; color: #006100; }
.s-neutral { background: #ffeb9c; color: #9c5700; }
.s-calc { background: #f2f2f2; color: #fa7d00; font-weight: 700; border: 1px solid #7f7f7f; }
.swatches .s-check { background: #a5a5a5; color: #fff; font-weight: 700; border: 3px double #3f3f3f; padding-left: 2px; }
.s-expl { color: #7f7f7f; font-style: italic; }
.s-link { color: #467886; text-decoration: underline; }
.gscroll { width: 19px; border-left: 1px solid #c8c8c8; display: grid; grid-template-rows: repeat(3, 1fr); }
.gscroll button + button { border-top: 1px solid #c8c8c8; }
.dim { color: #aaa; }
.flip { transform: rotate(180deg); }
.g-cells { width: 180px; }
.g-cells .body { padding: 8px 0 0 9px; }
.cell { width: 54px; }
.cell span { margin: 4px 0 6px; }
.g-edit { width: 257px; }
.g-edit .body { padding-left: 15px; }
.g-edit .stack { width: 112px; }
.g-edit .row { gap: 6px; }
.sf { width: 62px; padding-top: 10px; }
.fs { width: 56px; padding-top: 10px; }
.g-edit .two span { margin-top: 5px; }
.g-add { width: 77px; }
.g-add .two { width: 100%; padding-top: 10px; }
.g-add .two span { margin-top: 5px; }
.g-data { width: 77px; }
.g-data .two { width: 100%; padding-top: 8px; }
.g-data .two span { margin-top: 3px; }
.collapse { margin: 103px 11px 0 auto; height: 8px; }

/* formula bar */
.formulabar { display: flex; align-items: center; flex: none; height: 48px; padding: 10px 10px 8px; font-size: 16px; }
.formulabar > span:not(.dots) { display: flex; align-items: center; height: 30px; background: #fff; border: 1px solid #d0d0d0; border-radius: 5px; }
.namebox { width: 127px; padding: 0 7px 0 6px; }
.namebox input, .formula input { flex: 1; width: 0; }
.dots { width: 3px; height: 13px; margin: 0 11px; background: repeating-linear-gradient(#555 0 3px, transparent 3px 5px); }
.fx { width: 92px; padding: 0 6px; justify-content: space-between; margin-right: 5px; }
.fxb { font: italic 21px/22px "Liberation Serif", serif; color: #333; }
.formula { flex: 1; padding: 0 5px 0 12px; }

/* worksheet */
.sheet { display: flex; flex: 1; min-height: 0; }
.gridwrap { flex: 1; min-width: 0; overflow: hidden; border-right: 1px solid #d5d5d5; border-bottom: 1px solid #d5d5d5; }
.grid { width: 100%; table-layout: fixed; border-collapse: separate; border-spacing: 0; font: 16px/23px Roboto, sans-serif; color: #000; }
.w-head { width: 34px; }
.w-a { width: 21px; }
.w-b { width: 309px; }
.w-m { width: 142px; }
.grid th, .grid td { height: 24px; padding: 0; overflow: hidden; white-space: nowrap; }
.grid th { font: 16px/22px "Open Sans", sans-serif; color: #505050; text-align: center; background: #f0f0f0; }
.grid thead th { border-bottom: 1px solid #a0a0a0; background: linear-gradient(#f0f0f0, #ccc) right / 1px 100% no-repeat #f0f0f0; }
.grid thead th.corner { border-color: #d5d5d5; background: linear-gradient(135deg, transparent 50%, #d9d9d9 50%) 15px 5px / 15px 15px no-repeat #f0f0f0; }
.grid thead th.b { background: #f0f0f0; }
.grid thead th.rest { background: #f0f0f0; }
.grid tbody th { border-right: 1px solid #b0b0b0; background: linear-gradient(90deg, #f0f0f0, #ccc) bottom / 100% 1px no-repeat #f0f0f0; }
.grid td { background: #fff; text-align: right; padding-right: 10px; }
.grid td.label, .grid thead th.b { border-right: 1px solid #999; }
.grid td.label { text-align: left; padding: 0 0 0 3px; }
.grid td.lv1 { padding-left: 12px; }
.grid td.lv2 { padding-left: 21px; }
.grid .date td:not(.label), .grid .rate td:not(.label) { padding-right: 4px; }
.freeze td { border-bottom: 1px solid #999; }
.freeze td:nth-child(4) { color: #00f; }
.input .label { color: #00f; }
.total td, .strong td { font-weight: 700; }
.grid .total td:not(.a) { background: repeating-linear-gradient(90deg, #000 0 1px, #fff 1px 2px) bottom / 100% 1px no-repeat #fff; }
.note td { font-style: italic; font-size: 14px; line-height: 22px; }
.vscroll { width: 21px; margin: 0 2px 0 2px; background: #f5f5f5; border-radius: 10px; display: flex; flex-direction: column; align-items: center; padding: 6px 0 5px; }
.arrow-up, .arrow-down { border: 6px solid transparent; border-top: 0; border-bottom: 9px solid #666; }
.arrow-down { border-bottom: 0; border-top: 9px solid #666; margin-top: auto; }
.vscroll .thumb { width: 11px; height: 54%; margin-top: 6px; background: #707070; border-radius: 6px; }

/* sheet tabs */
.sheettabs { display: flex; flex: none; height: 40px; align-items: flex-start; padding: 5px 25px 0 0; font-size: 16px; }
.nav { height: 28px; width: 40px; }
.nav.first { margin-left: 16px; }
.tab { height: 30px; border-radius: 5px; padding: 0 13px; margin-right: 11px; position: relative; }
.tab::after { content: ""; position: absolute; right: -6px; top: 3px; width: 1px; height: 24px; background: #d0d0d0; }
.tab.plain { margin-left: 43px; }
.tab.data { background: #ffffcc; padding: 0 11px; color: #000; }
.tab.active { height: 34px; margin: -5px 11px 0 1px; padding: 0 11px; background: linear-gradient(#fff 10%, #c3a5d8); border-radius: 0 0 6px 6px; font-weight: 600; box-shadow: 0 0 0 1px #d5d5d5; clip-path: inset(0 -8px -3px -2px); }
.tab.active::after { top: 8px; }
.tab.active span { line-height: 27px; border-bottom: 3px solid #107c41; }
.tab.purple { background: #7030a0; color: #fff; }
.tab.gray { background: #d9d9d9; color: #000; padding: 0 17px; }
.plus { margin-left: 48px; height: 28px; }
.sheettabs .dots { margin: 9px 18px 0 auto; }
.hscroll { display: flex; align-items: center; width: 169px; height: 21px; margin-top: 4px; background: #f7f7f7; border-radius: 11px; padding: 0 6px; }
.lt, .rt { border: 6px solid transparent; border-left: 0; border-right: 9px solid #666; }
.rt { border-right: 0; border-left: 9px solid #666; margin-left: auto; }
.hscroll .thumb { width: 32px; height: 11px; margin-left: 6px; border-radius: 6px; background: #707070; }

/* status bar */
.status { display: flex; align-items: center; flex: none; height: 27px; background: #f4f4f4; border-top: 1px solid #fff; padding-left: 14px; font-size: 13px; }
.ready { width: 61px; }
.acc { font-weight: 700; font-size: 12px; gap: 3px; margin-left: 21px; }
.views { display: flex; margin-left: auto; align-self: stretch; }
.views button { width: 50px; }
.views .on { background: #e0e0e0; }
.zoom { display: flex; align-items: center; padding: 0 11px 0 7px; gap: 6px; }
.zoom input { appearance: none; width: 125px; height: 14px; background: linear-gradient(#666, #666) center / 100% 1px no-repeat; }
.zoom input::-webkit-slider-thumb { appearance: none; width: 6px; height: 14px; background: #555; }
.pc { margin-left: 12px; font-size: 12px; width: 30px; }

/* taskbar */
.taskbar { display: flex; flex: none; height: 50px; background: #d2e0eb; color: #111; }
.start { width: 60px; }
.tsearch { display: flex; align-items: center; width: 360px; background: #fff; border: 1px solid #c4c4c4; padding: 0 3px 0 14px; gap: 14px; font-size: 18px; }
.tsearch input { flex: 1; width: 0; }
.tsearch input::placeholder { color: #333; }
.apps { display: flex; }
.apps button { width: 51px; margin-right: 11px; border-top: 3px solid transparent; border-bottom: 3px solid transparent; }
.apps button:first-child { width: 60px; margin-right: 8px; }
.apps .run { border-bottom-color: #0078d7; }
.apps .multi { border-image: linear-gradient(90deg, #0078d7 80%, #66aae4 80%) 0 0 3 0; }
.tray { display: flex; align-items: center; margin-left: auto; margin-right: 5px; padding-right: 25px; border-right: 1px solid #a8b4be; height: 100%; }
.weather { font-size: 17px; gap: 12px; margin-right: 46px; }
.t { margin-right: 10px; }
.t.hidden-icons { margin-right: 16px; }
.clock { flex-direction: column; width: 72px; line-height: 23px; }
.t.note-btn { margin: 0 0 0 21px; }
```
